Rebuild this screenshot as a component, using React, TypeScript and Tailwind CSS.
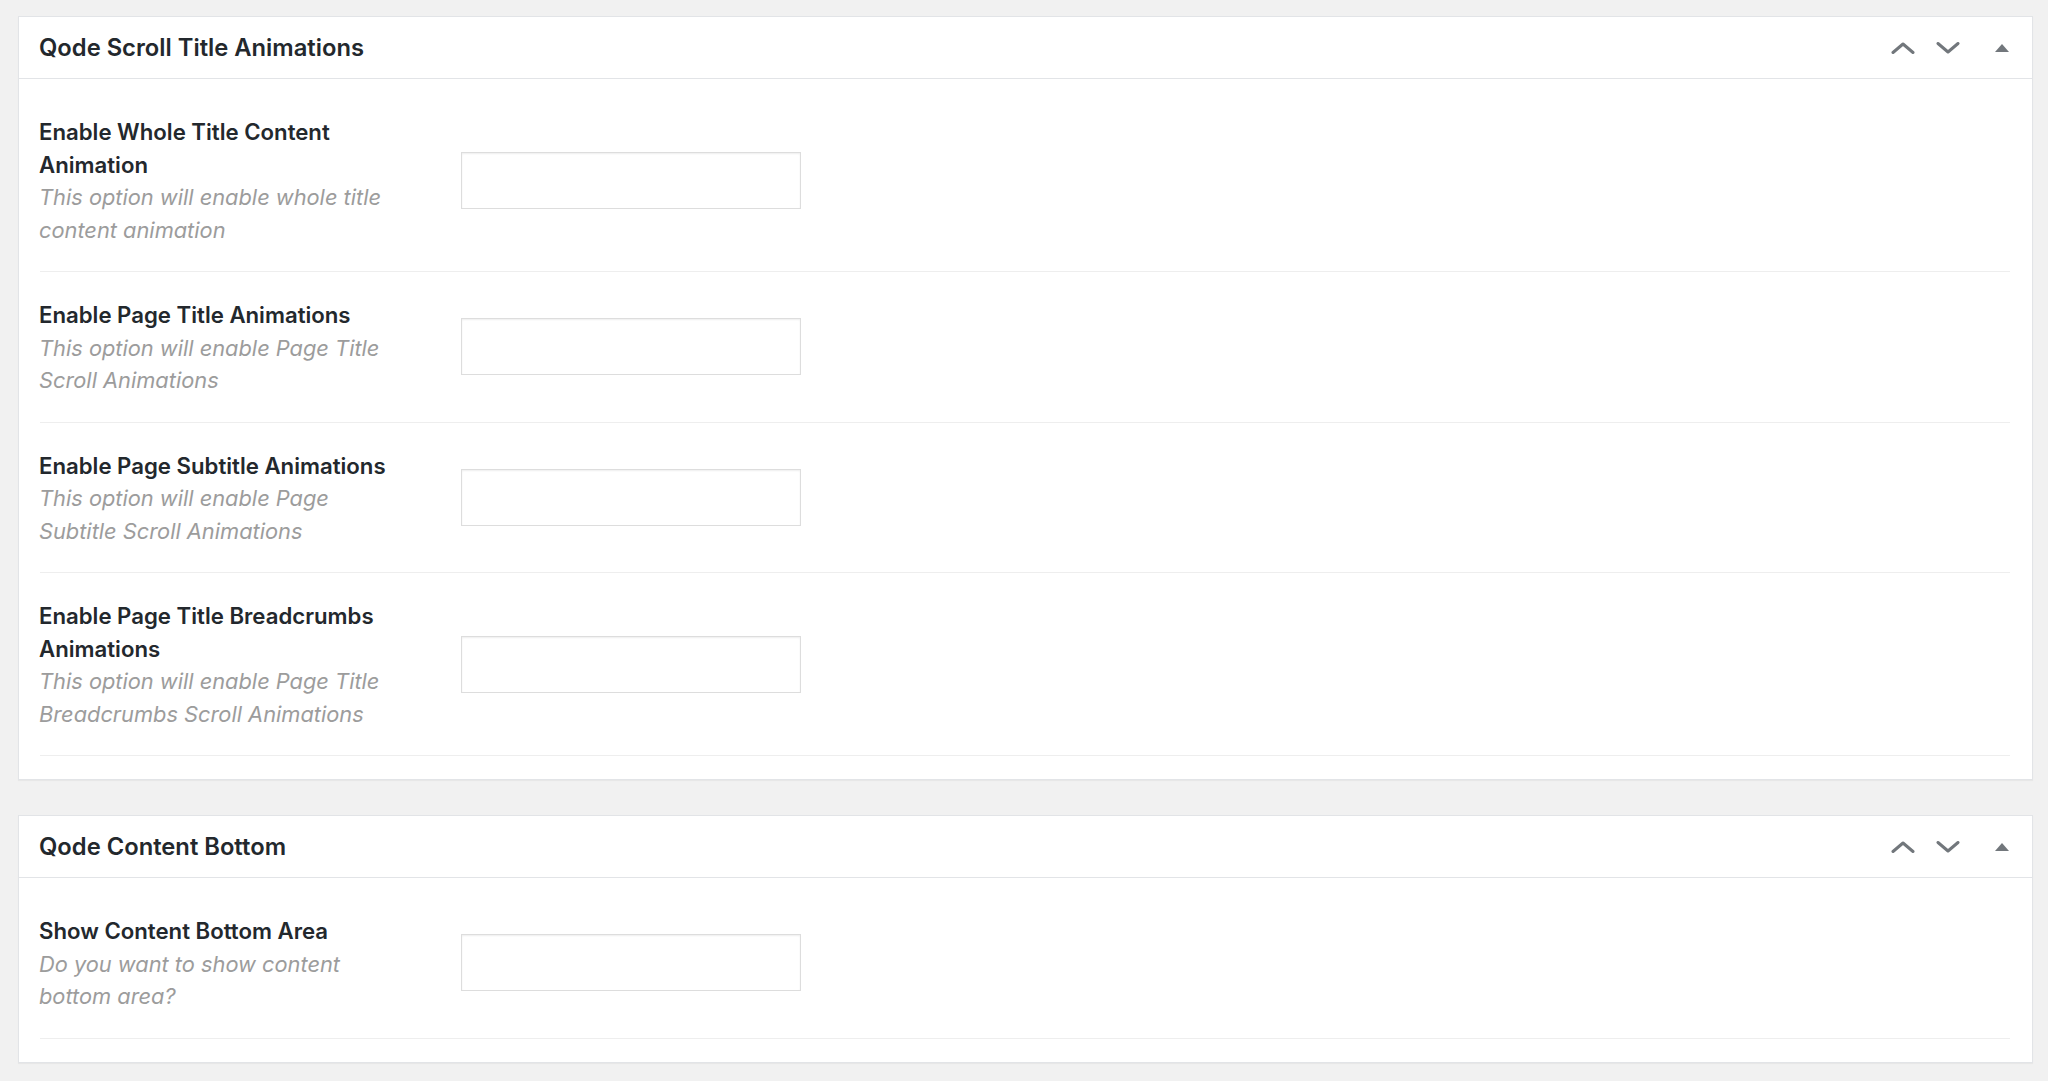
import React from "react";

type Opt = { label: string; desc: string };

const panel1: Opt[] = [
  { label: "Enable Whole Title Content Animation", desc: "This option will enable whole title content animation" },
  { label: "Enable Page Title Animations", desc: "This option will enable Page Title Scroll Animations" },
  { label: "Enable Page Subtitle Animations", desc: "This option will enable Page Subtitle Scroll Animations" },
  { label: "Enable Page Title Breadcrumbs Animations", desc: "This option will enable Page Title Breadcrumbs Scroll Animations" },
];

const panel2: Opt[] = [
  { label: "Show Content Bottom Area", desc: "Do you want to show content bottom area?" },
];

function HeaderIcons() {
  return (
    <div className="flex items-center pr-[23px]">
      <svg width="24" height="12" viewBox="0 0 24 12" className="block">
        <polyline points="2,10.5 12,2 22,10.5" fill="none" stroke="#72777c" strokeWidth="3" strokeLinecap="round" strokeLinejoin="round" />
      </svg>
      <svg width="24" height="12" viewBox="0 0 24 12" className="ml-[21px] block">
        <polyline points="2,1.5 12,10 22,1.5" fill="none" stroke="#72777c" strokeWidth="3" strokeLinecap="round" strokeLinejoin="round" />
      </svg>
      <svg width="14" height="8" viewBox="0 0 14 8" className="ml-[35px] block">
        <polygon points="0,8 7,0 14,8" fill="#72777c" />
      </svg>
    </div>
  );
}

function Panel({ title, options, className }: { title: string; options: Opt[]; className?: string }) {
  return (
    <div className={"border border-[#e2e4e7] bg-white shadow-[0_1px_1px_rgba(0,0,0,0.04)] " + (className ?? "")}>
      <div className="flex h-[62px] items-center justify-between border-b border-[#e2e4e7] pl-[20px]">
        <h2 className="pt-[1px] text-[23.75px] font-semibold text-[#23282d]">{title}</h2>
        <HeaderIcons />
      </div>
      <div className="pb-[23px] pl-[21px] pr-[22px] pt-[10px]">
        {options.map((o) => (
          <div key={o.label} className="flex items-center border-b border-[#eeeeee] py-[25px]">
            <div className="ml-[-1px] w-[356px] shrink-0 pt-[2px]">
              <div className="text-[22.2px] font-semibold leading-[32.5px] text-[#23282d]">{o.label}</div>
              <div className="text-[21.8px] italic leading-[32.5px] text-[#9c9c9c]">{o.desc}</div>
            </div>
            <div className="ml-[66px] h-[57px] w-[340px] border border-[#dddddd] bg-white shadow-[inset_0_1px_2px_rgba(0,0,0,0.07)]" />
          </div>
        ))}
      </div>
    </div>
  );
}

export default function App() {
  return (
    <div className="min-h-screen bg-[#f1f1f1] pb-[19px] pl-[18px] pr-[15px] pt-4 font-[Inter,sans-serif]">
      <Panel title="Qode Scroll Title Animations" options={panel1} />
      <Panel title="Qode Content Bottom" options={panel2} className="mt-[35px]" />
    </div>
  );
}
